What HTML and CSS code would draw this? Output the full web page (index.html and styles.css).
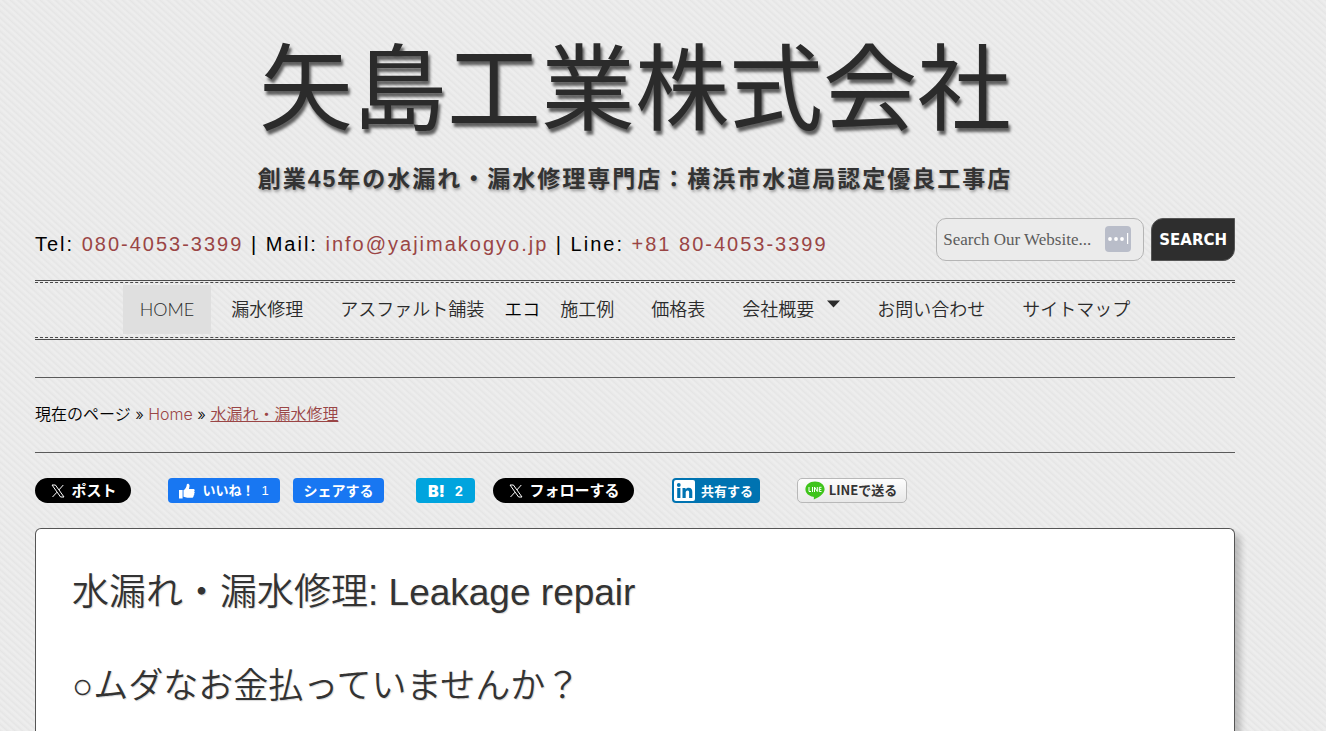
FILE: index.html
```html
<!DOCTYPE html>
<html lang="ja">
<head>
<meta charset="utf-8">
<title>矢島工業株式会社</title>
<link rel="stylesheet" href="styles.css">
</head>
<body>
<div class="page">
  <header class="header">
    <h1 class="site-title">矢島工業株式会社</h1>
    <p class="tagline">創業45年の水漏れ・漏水修理専門店：横浜市水道局認定優良工事店</p>
    <div class="contact-row">
      <p class="contact">Tel: <a href="#tel">080-4053-3399</a> | Mail: <a href="#mail">info@yajimakogyo.jp</a> | Line: <a href="#line">+81 80-4053-3399</a></p>
      <form class="search">
        <div class="search-box">
          <input class="search-input" type="text" placeholder="Search Our Website..." aria-label="Search Our Website">
          <svg class="search-badge" viewBox="0 0 26 26" aria-hidden="true"><rect width="26" height="26" rx="4" fill="#b9bdc9"/><g fill="#fff"><circle cx="5" cy="13" r="1.9"/><circle cx="11" cy="13" r="1.9"/><circle cx="17" cy="13" r="1.9"/><rect x="22" y="7" width="1.2" height="11"/></g></svg>
        </div>
        <button class="search-button" type="submit">SEARCH</button>
      </form>
    </div>
  </header>

  <nav class="nav">
    <ul class="nav-list">
      <li><a class="nav-link current" href="#home">HOME</a></li>
      <li><a class="nav-link" href="#leak">漏水修理</a></li>
      <li><a class="nav-link" href="#asphalt">アスファルト舗装</a></li>
      <li class="nav-text">エコ</li>
      <li><a class="nav-link" href="#works">施工例</a></li>
      <li><a class="nav-link" href="#price">価格表</a></li>
      <li><a class="nav-link has-menu" href="#company">会社概要<svg class="arrow" viewBox="0 0 13 8" aria-hidden="true"><path d="M0 0.5H13L6.5 7.5Z" fill="#2b2b2b"/></svg></a></li>
      <li><a class="nav-link" href="#inquiry">お問い合わせ</a></li>
      <li><a class="nav-link" href="#sitemap">サイトマップ</a></li>
    </ul>
  </nav>

  <div class="breadcrumb">現在のページ » <a href="#home">Home</a> » <a class="here" href="#here">水漏れ・漏水修理</a></div>

  <div class="share">
    <button class="btn x-btn x-post" type="button"><svg class="x-icon" viewBox="0 0 14 14" aria-hidden="true"><path d="M1 1h3.400l8.600 12H9.600zM12.300 1L7.800 6M6 8.200L1.500 13" fill="none" stroke="#fff" stroke-width="1"/></svg><span class="label">ポスト</span></button>
    <button class="btn fb-btn fb-like" type="button"><svg class="thumb" viewBox="0 0 16 16" aria-hidden="true"><path d="M0 7h3.600v8.500H0zM4.500 7.200C6.600 6 7.600 4 7.800 1.500 7.900.2 10.300.3 10.500 2.300c.1 1.300-.2 2.500-.6 3.600h4.300c1.600 0 2 1.800.9 2.500.9.600.8 1.900-.1 2.300.6.700.3 1.800-.5 2.100.2 1-.4 1.900-1.600 1.900H8.300c-1.500 0-2.300-.6-3.800-.9z" fill="#fff"/></svg><span class="label">いいね！ </span><span class="count">1</span></button>
    <button class="btn fb-btn fb-share" type="button"><span class="label">シェアする</span></button>
    <button class="btn hatena" type="button"><b>B!</b><span>2</span></button>
    <button class="btn x-btn x-follow" type="button"><svg class="x-icon" viewBox="0 0 14 14" aria-hidden="true"><path d="M1 1h3.400l8.600 12H9.600zM12.300 1L7.800 6M6 8.200L1.500 13" fill="none" stroke="#fff" stroke-width="1"/></svg><span class="label">フォローする</span></button>
    <button class="btn linkedin" type="button"><svg class="in-icon" viewBox="0 0 21 21" aria-hidden="true"><rect width="21" height="21" rx="2" fill="#fff"/><g fill="#0073b1"><circle cx="4.800" cy="5" r="1.900"/><rect x="3.200" y="8" width="3.200" height="10"/><path d="M8.500 8h3v1.400c.6-1 1.700-1.700 3.200-1.700 2.700 0 3.600 1.700 3.600 4.300v6h-3.200v-5.400c0-1.300-.3-2.200-1.500-2.200-1.400 0-1.900 1-1.900 2.300V18H8.500z"/></g></svg><span>共有する</span></button>
    <button class="btn line-btn" type="button"><svg class="line-icon" viewBox="0 0 20 19" aria-hidden="true"><path d="M10 .5C4.700.5.400 3.900.4 8.200c0 3.700 3.200 6.800 7.900 7.500.9.200.6 1.200.5 2.700 3.500-1.400 10.800-5.200 10.800-10.200C19.600 3.900 15.300.5 10 .5z" fill="#3ec41a"/><g fill="none" stroke="#fff" stroke-width="1"><path d="M4 6v4.500h2M7.500 6v5M9.500 11V6l2.800 4.500V6M16.500 6.300h-2.200v4.200h2.200M14.300 8.400h2"/></g></svg><span class="label">LINEで送る</span></button>
  </div>

  <main class="article">
    <h2 class="article-title">水漏れ・漏水修理: Leakage repair</h2>
    <h3 class="article-sub">○ムダなお金払っていませんか？</h3>
  </main>
</div>
</body>
</html>
```
FILE: styles.css
```css
* { box-sizing: border-box; }

body {
  margin: 0;
  color: #000;
  font-family: "Liberation Sans", "Noto Sans CJK JP", sans-serif;
  background: repeating-linear-gradient(42deg, #e5e5e5 0, #e9e9e9 1px, #eeeeee 3px, #ebebeb 4px, #e5e5e5 5px);
}

h1, h2, h3, p, ul { margin: 0; padding: 0; font-weight: normal; }

.page {
  display: flex;
  flex-direction: column;
  min-height: 100vh;
  max-width: 1200px;
  margin: 0 35px;
}

a { color: #9a4545; text-decoration: none; }

.header { text-align: center; padding-top: 22px; }

.site-title {
  font-family: "Noto Sans CJK JP", sans-serif;
  font-size: 94px;
  line-height: 120px;
  color: #2b2b2b;
  text-shadow: 2px 4px 3px rgba(0, 0, 0, 0.6);
}

.tagline {
  margin-top: 23px;
  font-size: 23px;
  line-height: 28px;
  font-weight: bold;
  letter-spacing: 2px;
  color: #333;
  text-shadow: 1px 2px 3px rgba(0, 0, 0, 0.35);
}

.contact-row {
  display: flex;
  justify-content: space-between;
  align-items: center;
  margin-top: 25px;
}

.contact { padding-top: 10px; font-size: 20px; letter-spacing: 2px; }

.search { display: flex; gap: 7px; }

.search-box { position: relative; }

.search-input {
  width: 208px;
  height: 43px;
  padding: 0 40px 0 6px;
  border: 1px solid #b5b5b5;
  border-radius: 10px;
  background: #ebebeb;
  font-family: "Liberation Serif", serif;
  font-size: 17px;
}

.search-input::placeholder { color: #5c5c5c; }

.search-badge { position: absolute; top: 8px; right: 13px; width: 26px; height: 26px; }

.search-button {
  height: 43px;
  padding: 0 7px;
  border: 1px solid #555;
  border-radius: 12px 0 12px 0;
  background: #2e2e2e;
  color: #fff;
  font-family: "DejaVu Sans", sans-serif;
  font-size: 15px;
  font-weight: bold;
}

.nav {
  margin-top: 19px;
  padding: 1px 0;
  border-top: 1px solid #4a4a4a;
  border-bottom: 1px solid #4a4a4a;
}

.nav-list {
  display: flex;
  justify-content: center;
  gap: 3px;
  padding: 2px 0 3px;
  border-top: 1px dashed #4a4a4a;
  border-bottom: 1px dashed #4a4a4a;
  list-style: none;
  font-family: Lato, "Noto Sans CJK JP", sans-serif;
  font-size: 18px;
  font-weight: 350;
  line-height: 49px;
}

.nav-link { display: block; padding: 0 17px; color: #2b2b2b; }
.nav-link.current { background: #dfdfdf; }
.nav-link.has-menu { display: flex; }
.arrow { width: 13px; height: 8px; margin: 15px 0 0 13px; }

.breadcrumb {
  margin-top: 37px;
  padding: 24px 0 25px;
  border-top: 1px solid #5a5a5a;
  border-bottom: 1px solid #5a5a5a;
  font-family: Inter, "Noto Sans CJK JP", sans-serif;
  font-size: 16px;
  font-weight: 350;
  line-height: 25px;
}

.here { text-decoration: underline; }

.share { display: flex; align-items: center; margin-top: 25px; }

.btn {
  display: flex;
  align-items: center;
  justify-content: center;
  height: 25px;
  padding: 0;
  border: 0;
  border-radius: 4px;
  color: #fff;
  font-family: "Liberation Sans", "Noto Sans CJK JP", sans-serif;
  font-size: 13px;
  font-weight: bold;
  white-space: nowrap;
}

.label { padding-bottom: 2px; }

.x-btn { gap: 6px; border-radius: 13px; background: #000; font-size: 15px; }
.x-icon { width: 14px; height: 14px; }
.x-post { width: 96px; padding-left: 2px; }
.x-follow { width: 141px; margin-left: 18px; padding-left: 2px; }

.fb-btn { background: #1877f2; }
.fb-like { width: 112px; gap: 7px; margin-left: 37px; }
.fb-share { width: 91px; margin-left: 13px; font-size: 14px; }
.thumb { width: 16px; height: 16px; }
.count { font-weight: normal; }

.hatena { width: 59px; gap: 10px; margin-left: 32px; background: #00a4de; font-family: Inter, sans-serif; }
.hatena b { font-size: 16px; font-weight: 900; }

.linkedin { width: 88px; gap: 6px; justify-content: flex-start; padding-left: 2px; margin-left: 38px; background: #0073b1; }
.in-icon { width: 21px; height: 21px; }

.line-btn {
  width: 110px;
  gap: 4px;
  margin-left: 37px;
  padding-right: 2px;
  border: 1px solid #b8b8b8;
  border-radius: 5px;
  background: linear-gradient(#fdfdfd, #e8e8e8);
  color: #333;
  font-family: "Noto Sans CJK JP", sans-serif;
}
.line-icon { width: 20px; height: 19px; }

.article {
  flex: 1;
  margin-top: 25px;
  padding: 36px 36px 0;
  border: 1px solid #555;
  border-bottom: 0;
  border-radius: 6px 6px 0 0;
  background: #fff;
  box-shadow: 6px 6px 6px rgba(0, 0, 0, 0.2);
  color: #333;
}

.article-title, .article-sub {
  font-weight: 350;
  text-shadow: 1px 1px 1px rgba(0, 0, 0, 0.15);
}

.article-title { font-size: 37px; line-height: 56px; }
.article-sub { margin-top: 39px; font-size: 35px; line-height: 52px; }
```
